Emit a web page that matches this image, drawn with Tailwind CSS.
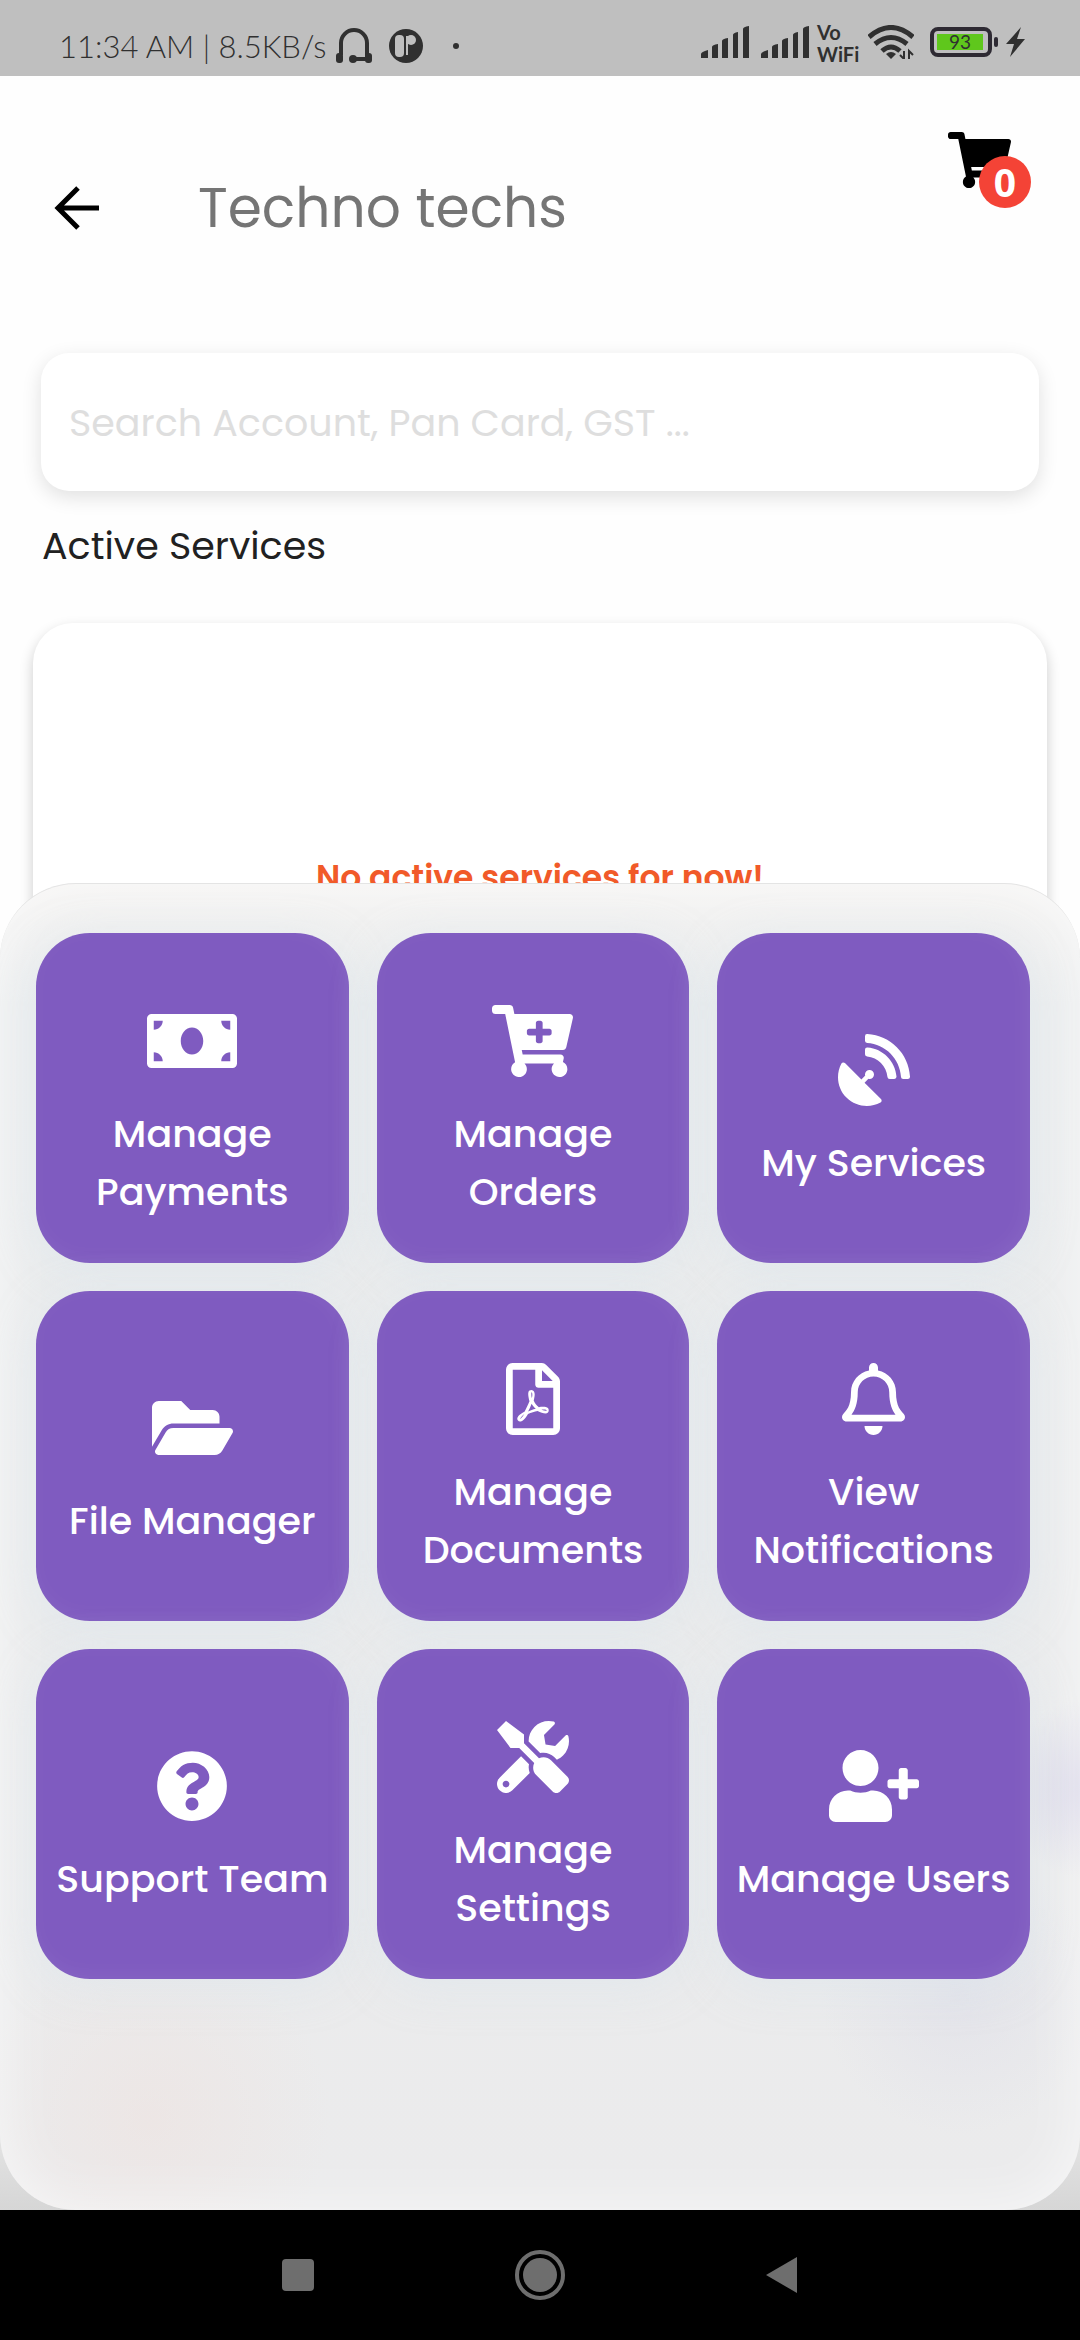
<!DOCTYPE html>
<html lang="en">
<head>
  <meta charset="UTF-8" />
  <meta name="viewport" content="width=device-width, initial-scale=1.0"/>
  <title>Techno techs</title>
  <script src="https://cdn.jsdelivr.net/npm/@tailwindcss/browser@4"></script>
</head>

<body class="min-h-screen flex flex-col bg-white font-['Poppins','Inter',sans-serif]">

  <!-- status bar -->
  <div class="h-[76px] shrink-0 bg-[#bfbfbf] text-[#303030] flex items-end justify-between pl-[59px] pr-[54px] pb-3">
    <div class="flex items-center">
      <span class="font-['Lato',sans-serif] font-light text-[31px] leading-9 whitespace-nowrap">11:34 AM | 8.5KB/s</span>
      <svg class="w-[38px] h-9 ml-2" viewBox="0 0 38 36" fill="none" stroke="currentColor" stroke-width="4">
        <path d="M6 27V15a13 13 0 0 1 26 0v16H19" />
        <rect x="1" y="25" width="7" height="10" rx="3" fill="currentColor" stroke="none" />
        <rect x="30" y="25" width="7" height="10" rx="3" fill="currentColor" stroke="none" />
        <circle cx="18" cy="31" r="4" fill="currentColor" stroke="none" />
      </svg>
      <svg class="w-[34px] h-[34px] ml-4" viewBox="0 0 34 34">
        <circle cx="17" cy="17" r="17" fill="currentColor" />
        <rect x="6" y="6" width="9" height="22" rx="4" fill="#bfbfbf" />
        <path d="M18 7v19" stroke="#bfbfbf" stroke-width="2" />
        <circle cx="22" cy="11" r="5" fill="#bfbfbf" />
      </svg>
      <div class="w-[6px] h-[6px] ml-[30px] rounded-full bg-[#303030]"></div>
    </div>
    <div class="flex items-center">
      <svg class="w-12 h-8 mr-3" viewBox="0 0 48 32" fill="currentColor">
        <path d="M0 32v-4q0-2 7-4v8zM11 32V21q0-2 6-3v14zM21 32V15q0-2 6-3v20zM32 32V9q0-2 5-3v26zM42 32V3q0-2 6-3v32z" />
      </svg>
      <svg class="w-12 h-8 mr-2" viewBox="0 0 48 32" fill="currentColor">
        <path d="M0 32v-4q0-2 7-4v8zM11 32V21q0-2 6-3v14zM21 32V15q0-2 6-3v20zM32 32V9q0-2 5-3v26zM42 32V3q0-2 6-3v32z" />
      </svg>
      <div class="w-[43px] mr-2 font-['Lato',sans-serif] font-bold text-[20px] whitespace-nowrap">
        <div class="leading-6">Vo</div>
        <div class="leading-5">WiFi</div>
      </div>
      <svg class="w-[46px] h-[34px] mr-4" viewBox="0 0 46 34" fill="none" stroke="currentColor" stroke-width="5">
        <path d="M1 12q22-19 44 0M7 19q16-13 32 0M14 26q9-8 18 0" />
        <path d="M18 29q5-4 10 0l-5 5z" fill="currentColor" stroke="none" />
        <path d="M36 26v8l-4-4M41 34v-8l4 4" stroke-width="2" />
      </svg>
      <div class="w-[62px] h-[30px] border-4 border-[#2e2a33] rounded-lg p-[3px]">
        <div class="h-4 w-[46px] bg-[#5fc71c] text-center font-['Lato',sans-serif] text-[19px] leading-4">93</div>
      </div>
      <div class="w-1 h-[10px] ml-[2px] mr-2 rounded-sm bg-[#2e2a33]"></div>
      <svg class="w-5 h-[30px]" viewBox="0 0 20 30" fill="currentColor"><path d="M15 0L0 17h8L4 30 19 12h-8z" /></svg>
    </div>
  </div>

  <main class="relative flex-1 px-[33px] bg-[linear-gradient(to_top,#d6d6d6,#fefefe_220px)]">

    <header class="flex items-center h-[264px] pl-5">
      <a href="#" aria-label="Back">
        <svg class="w-12 h-[44px]" viewBox="0 0 48 44" fill="none" stroke="#000" stroke-width="5">
          <path d="M25 2L5 22l20 20M5 22h41" />
        </svg>
      </a>
      <h1 class="ml-[97px] text-[55px] leading-[72px] text-[#757575]">Techno techs</h1>
      <button class="relative ml-auto mr-9 mb-24" aria-label="Cart">
        <svg class="w-[63px] h-14" viewBox="0 0 576 512"><path d="M528.12 301.319l47.273-208C578.806 78.301 567.391 64 551.99 64H159.208l-9.166-44.81C147.758 8.021 137.93 0 126.529 0H24C10.745 0 0 10.745 0 24v16c0 13.255 10.745 24 24 24h69.883l70.248 343.435C147.325 417.1 136 435.222 136 456c0 30.928 25.072 56 56 56s56-25.072 56-56c0-15.674-6.447-29.835-16.824-40h209.647C430.447 426.165 424 440.326 424 456c0 30.928 25.072 56 56 56s56-25.072 56-56c0-22.172-12.888-41.332-31.579-50.405l5.517-24.276c3.413-15.018-8.002-29.319-23.403-29.319H218.117l-6.545-32h293.145c11.206 0 20.92-7.754 23.403-18.681z"/></svg>
        <span class="absolute -right-5 -bottom-5 w-[52px] h-[52px] rounded-full bg-[#f44336] text-white font-['Open_Sans',sans-serif] text-[39px] leading-[52px] font-bold text-center">0</span>
      </button>
    </header>

    <input type="text" aria-label="Search" placeholder="Search Account, Pan Card, GST ..." class="block mx-auto mt-[13px] w-[calc(100%-16px)] h-[138px] px-7 rounded-[28px] bg-white text-[38px] placeholder:text-[#dedede] shadow-[0_6px_20px_rgba(0,0,0,0.12)] outline-none" />

    <h2 class="mt-[26px] pl-[9px] text-[38px] leading-[58px] text-[#212121]">Active Services</h2>

    <div class="mt-12 h-[560px] pt-[229px] rounded-[40px] bg-white shadow-[0_6px_14px_rgba(0,0,0,0.2)] text-center text-[33px] leading-[52px] font-semibold text-[#f15a29]">No active services for now!</div>

    <!-- bottom sheet -->
    <div class="absolute inset-x-0 bottom-0 pt-[49px] pl-9 pr-[50px] pb-[231px] rounded-[76px] border-t border-[#e4e4e4] shadow-[inset_0_0_60px_rgba(255,255,255,0.65)] bg-[radial-gradient(circle_at_150px_1235px,rgba(238,226,223,0.55),transparent_180px),radial-gradient(circle_at_1090px_905px,rgba(208,204,230,0.7),transparent_90px),radial-gradient(circle_at_960px_1110px,rgba(222,222,232,0.6),transparent_140px),linear-gradient(#f4f3f2,#ebedee_120px,#ebebec)]">
      <div class="grid grid-cols-3 gap-7">

        <button class="h-[330px] pt-[30px] flex flex-col items-center justify-center gap-7 rounded-[54px] bg-[#7f5bc0] text-white text-[38px] leading-[58px] font-medium shadow-[0_8px_40px_rgba(218,230,238,0.5),inset_-4px_-4px_20px_rgba(255,255,255,0.06)]">
          <svg class="h-[72px]" viewBox="0 0 640 512" fill="currentColor"><path d="M608 64H32C14.33 64 0 78.33 0 96v320c0 17.67 14.33 32 32 32h576c17.67 0 32-14.33 32-32V96c0-17.67-14.33-32-32-32zM48 400v-64c35.35 0 64 28.65 64 64H48zm0-224v-64h64c0 35.35-28.65 64-64 64zm272 176c-44.19 0-80-42.99-80-96 0-53.02 35.82-96 80-96s80 42.98 80 96c0 53.03-35.83 96-80 96zm272 48h-64c0-35.35 28.65-64 64-64v64zm0-224c-35.35 0-64-28.65-64-64h64v64z"/></svg>
          <span>Manage<br>Payments</span>
        </button>

        <button class="h-[330px] pt-[30px] flex flex-col items-center justify-center gap-7 rounded-[54px] bg-[#7f5bc0] text-white text-[38px] leading-[58px] font-medium shadow-[0_8px_40px_rgba(218,230,238,0.5),inset_-4px_-4px_20px_rgba(255,255,255,0.06)]">
          <svg class="h-[72px]" viewBox="0 0 576 512" fill="currentColor"><path d="M504.717 320H211.572l6.545 32h268.418c15.401 0 26.816 14.301 23.403 29.319l-5.517 24.276C523.112 414.668 536 433.828 536 456c0 31.202-25.519 56.444-56.824 55.994-29.823-.429-54.35-24.631-55.155-54.447-.44-16.287 6.085-31.049 16.803-41.548H231.176C241.553 426.165 248 440.326 248 456c0 31.813-26.528 57.431-58.67 55.938-28.54-1.325-51.751-24.385-53.251-52.917-1.158-22.034 10.436-41.455 28.051-51.586L93.883 64H24C10.745 64 0 53.255 0 40V24C0 10.745 10.745 0 24 0h102.529c11.401 0 21.228 8.021 23.513 19.19L159.208 64H551.99c15.401 0 26.816 14.301 23.403 29.319l-47.273 208C525.637 312.246 515.923 320 504.717 320zM408 168h-48v-40c0-8.837-7.163-16-16-16h-16c-8.837 0-16 7.163-16 16v40h-48c-8.837 0-16 7.163-16 16v16c0 8.837 7.163 16 16 16h48v40c0 8.837 7.163 16 16 16h16c8.837 0 16-7.163 16-16v-40h48c8.837 0 16-7.163 16-16v-16c0-8.837-7.163-16-16-16z"/></svg>
          <span>Manage<br>Orders</span>
        </button>

        <button class="h-[330px] pt-[30px] flex flex-col items-center justify-center gap-7 rounded-[54px] bg-[#7f5bc0] text-white text-[38px] leading-[58px] font-medium shadow-[0_8px_40px_rgba(218,230,238,0.5),inset_-4px_-4px_20px_rgba(255,255,255,0.06)]">
          <svg class="h-[72px]" viewBox="0 0 512 512" fill="currentColor"><path d="M305.44954,462.59c7.39157,7.29792,6.18829,20.09661-3.00038,25.00356-77.713,41.80281-176.72559,29.9105-242.34331-35.7082C-5.49624,386.28227-17.404,287.362,24.41381,209.554c4.89125-9.095,17.68975-10.29834,25.00318-3.00043L166.22872,323.36708l27.39411-27.39452c-.68759-2.60974-1.594-5.00071-1.594-7.81361a32.00407,32.00407,0,1,1,32.00407,32.00455c-2.79723,0-5.20378-.89075-7.79786-1.594l-27.40974,27.41015ZM511.9758,303.06732a16.10336,16.10336,0,0,1-16.002,17.00242H463.86031a15.96956,15.96956,0,0,1-15.89265-15.00213C440.46671,175.5492,336.45348,70.53427,207.03078,63.53328a15.84486,15.84486,0,0,1-15.00191-15.90852V16.02652A16.09389,16.09389,0,0,1,209.031.02425C372.25491,8.61922,503.47472,139.841,511.9758,303.06732Zm-96.01221-.29692a16.21093,16.21093,0,0,1-16.11142,17.29934H367.645a16.06862,16.06862,0,0,1-15.89265-14.70522c-6.90712-77.01094-68.118-138.91037-144.92467-145.22376a15.94,15.94,0,0,1-14.79876-15.89289V112.13393a16.134,16.134,0,0,1,17.29908-16.096C319.45132,104.5391,407.55627,192.64538,415.96359,302.7704Z"/></svg>
          <span>My Services</span>
        </button>

        <button class="h-[330px] pt-[30px] flex flex-col items-center justify-center gap-7 rounded-[54px] bg-[#7f5bc0] text-white text-[38px] leading-[58px] font-medium shadow-[0_8px_40px_rgba(218,230,238,0.5),inset_-4px_-4px_20px_rgba(255,255,255,0.06)]">
          <svg class="h-[72px]" viewBox="0 0 576 512" fill="currentColor"><path d="M572.694 292.093L500.27 416.248A63.997 63.997 0 0 1 444.989 448H45.025c-18.523 0-30.064-20.093-20.731-36.093l72.424-124.155A64 64 0 0 1 152 256h399.964c18.523 0 30.064 20.093 20.73 36.093zM152 224h328v-48c0-26.51-21.49-48-48-48H272l-64-64H48C21.49 64 0 85.49 0 112v278.046l69.077-118.418C86.214 242.25 117.989 224 152 224z"/></svg>
          <span>File Manager</span>
        </button>

        <button class="h-[330px] pt-[30px] flex flex-col items-center justify-center gap-7 rounded-[54px] bg-[#7f5bc0] text-white text-[38px] leading-[58px] font-medium shadow-[0_8px_40px_rgba(218,230,238,0.5),inset_-4px_-4px_20px_rgba(255,255,255,0.06)]">
          <svg class="h-[72px]" viewBox="0 0 384 512" fill="currentColor"><path d="M369.9 97.9L286 14C277 5 264.8-.1 252.1-.1H48C21.5 0 0 21.5 0 48v416c0 26.5 21.5 48 48 48h288c26.5 0 48-21.5 48-48V131.9c0-12.7-5.1-25-14.1-34zM332.1 128H256V51.9l76.1 76.1zM48 464V48h160v104c0 13.3 10.7 24 24 24h104v288H48zm250.2-143.7c-12.2-12-47-8.7-64.4-6.5-17.2-10.5-28.7-25-36.8-46.3 3.9-16.1 10.1-40.6 5.4-56-4.2-26.2-37.8-23.6-42.6-5.9-4.4 16.1-.4 38.5 7 67.1-10 23.9-24.9 56-35.4 74.4-20 10.3-47 26.2-51 46.2-3.3 15.8 26 55.2 76.1-31.2 22.4-7.4 46.8-16.5 68.4-20.1 18.9 10.2 41 17 55.8 17 25.5 0 28-28.2 17.5-38.7zm-198.1 77.8c5.1-13.7 24.5-29.5 30.4-35-19 30.3-30.4 35.7-30.4 35zm81.6-190.6c7.4 0 6.7 32.1 1.8 40.8-4.4-13.9-4.3-40.8-1.8-40.8zm-24.4 136.6c9.7-16.9 18-37 24.7-54.7 8.3 15.1 18.9 27.2 30.1 35.5-20.8 4.3-38.9 13.1-54.8 19.2zm131.6-5s-5 6-37.3-7.8c35.1-2.6 40.9 5.4 37.3 7.8z"/></svg>
          <span>Manage<br>Documents</span>
        </button>

        <button class="h-[330px] pt-[30px] flex flex-col items-center justify-center gap-7 rounded-[54px] bg-[#7f5bc0] text-white text-[38px] leading-[58px] font-medium shadow-[0_8px_40px_rgba(218,230,238,0.5),inset_-4px_-4px_20px_rgba(255,255,255,0.06)]">
          <svg class="h-[72px]" viewBox="0 0 448 512" fill="currentColor"><path d="M439.39 362.29c-19.32-20.76-55.47-51.99-55.47-154.29 0-77.7-54.48-139.9-127.94-155.16V32c0-17.67-14.32-32-31.98-32s-31.98 14.33-31.98 32v20.84C118.56 68.1 64.08 130.3 64.08 208c0 102.3-36.15 133.53-55.47 154.29-6 6.45-8.66 14.16-8.61 21.71.11 16.4 12.98 32 32.1 32h383.8c19.12 0 32-15.6 32.1-32 .05-7.55-2.61-15.27-8.61-21.71zM67.53 368c21.22-27.97 44.42-74.33 44.53-159.42 0-.2-.06-.38-.06-.58 0-61.86 50.14-112 112-112s112 50.14 112 112c0 .2-.06.38-.06.58.11 85.1 23.31 131.46 44.53 159.42H67.53zM224 512c35.32 0 63.97-28.65 63.97-64H160.03c0 35.35 28.65 64 63.97 64z"/></svg>
          <span>View<br>Notifications</span>
        </button>

        <button class="h-[330px] pt-[30px] flex flex-col items-center justify-center gap-7 rounded-[54px] bg-[#7f5bc0] text-white text-[38px] leading-[58px] font-medium shadow-[0_8px_40px_rgba(218,230,238,0.5),inset_-4px_-4px_20px_rgba(255,255,255,0.06)]">
          <svg class="h-[72px]" viewBox="0 0 512 512" fill="currentColor"><path d="M504 256c0 136.997-111.043 248-248 248S8 392.997 8 256C8 119.083 119.043 8 256 8s248 111.083 248 248zM262.655 90c-54.497 0-89.255 22.957-116.549 63.758-3.536 5.286-2.353 12.415 2.715 16.258l34.699 26.31c5.205 3.947 12.621 3.008 16.665-2.122 17.864-22.658 30.113-35.797 57.303-35.797 20.429 0 45.698 13.148 45.698 32.958 0 14.976-12.363 22.667-32.534 33.976C247.128 238.528 216 254.941 216 296v4c0 6.627 5.373 12 12 12h56c6.627 0 12-5.373 12-12v-1.333c0-28.462 83.186-29.647 83.186-106.667 0-58.002-60.165-102-116.531-102zM256 338c-25.365 0-46 20.635-46 46 0 25.364 20.635 46 46 46s46-20.636 46-46c0-25.365-20.635-46-46-46z"/></svg>
          <span>Support Team</span>
        </button>

        <button class="h-[330px] pt-[30px] flex flex-col items-center justify-center gap-7 rounded-[54px] bg-[#7f5bc0] text-white text-[38px] leading-[58px] font-medium shadow-[0_8px_40px_rgba(218,230,238,0.5),inset_-4px_-4px_20px_rgba(255,255,255,0.06)]">
          <svg class="h-[72px]" viewBox="0 0 512 512" fill="currentColor"><path d="M501.1 395.7L384 278.6c-23.1-23.1-57.6-27.6-85.4-13.9L192 158.1V96L64 0 0 64l96 128h62.1l106.6 106.6c-13.6 27.8-9.2 62.3 13.9 85.4l117.1 117.1c14.6 14.6 38.2 14.6 52.7 0l52.7-52.7c14.5-14.6 14.5-38.2 0-52.7zM331.7 225c28.3 0 54.9 11 74.9 31l19.4 19.4c15.8-6.9 30.8-16.5 43.8-29.5 37.1-37.1 49.7-89.3 37.9-136.7-2.2-9-13.5-12.1-20.1-5.5l-74.4 74.4-67.9-11.3L334 98.9l74.4-74.4c6.6-6.6 3.4-17.9-5.7-20.2-47.4-11.7-99.6.9-136.6 37.9-28.5 28.5-41.9 66.1-41.2 103.6l82.1 82.1c8.1-1.9 16.5-2.9 24.7-2.9zm-103.9 82l-56.7-56.7L18.7 402.8c-25 25-25 65.5 0 90.5s65.5 25 90.5 0l123.6-123.6c-7.6-19.9-9.9-41.6-5-62.7zM64 472c-13.2 0-24-10.8-24-24 0-13.3 10.7-24 24-24s24 10.7 24 24c0 13.2-10.7 24-24 24z"/></svg>
          <span>Manage<br>Settings</span>
        </button>

        <button class="h-[330px] pt-[30px] flex flex-col items-center justify-center gap-7 rounded-[54px] bg-[#7f5bc0] text-white text-[38px] leading-[58px] font-medium shadow-[0_8px_40px_rgba(218,230,238,0.5),inset_-4px_-4px_20px_rgba(255,255,255,0.06)]">
          <svg class="h-[72px]" viewBox="0 0 640 512" fill="currentColor"><path d="M624 208h-64v-64c0-8.8-7.2-16-16-16h-32c-8.8 0-16 7.2-16 16v64h-64c-8.8 0-16 7.2-16 16v32c0 8.8 7.2 16 16 16h64v64c0 8.8 7.2 16 16 16h32c8.8 0 16-7.2 16-16v-64h64c8.8 0 16-7.2 16-16v-32c0-8.8-7.2-16-16-16zm-400 48c70.7 0 128-57.3 128-128S294.7 0 224 0 96 57.3 96 128s57.3 128 128 128zm89.6 32h-16.7c-22.2 10.2-46.9 16-72.9 16s-50.6-5.8-72.9-16h-16.7C60.2 288 0 348.2 0 422.4V464c0 26.5 21.5 48 48 48h352c26.5 0 48-21.5 48-48v-41.6c0-74.2-60.2-134.4-134.4-134.4z"/></svg>
          <span>Manage Users</span>
        </button>

      </div>
    </div>
  </main>

  <!-- android nav -->
  <nav class="h-[130px] shrink-0 bg-black flex items-center justify-center gap-[201px]">
    <button aria-label="Recent apps" class="w-8 h-8 rounded-sm bg-[#6e6e6e]"></button>
    <button aria-label="Home" class="w-[50px] h-[50px] rounded-full border-4 border-[#6e6e6e] p-1"><span class="block w-full h-full rounded-full bg-[#6e6e6e]"></span></button>
    <button aria-label="Back">
      <svg class="w-8 h-[38px]" viewBox="0 0 32 38" fill="#6e6e6e"><path d="M31 1v36L0 19z" /></svg>
    </button>
  </nav>

</body>
</html>
